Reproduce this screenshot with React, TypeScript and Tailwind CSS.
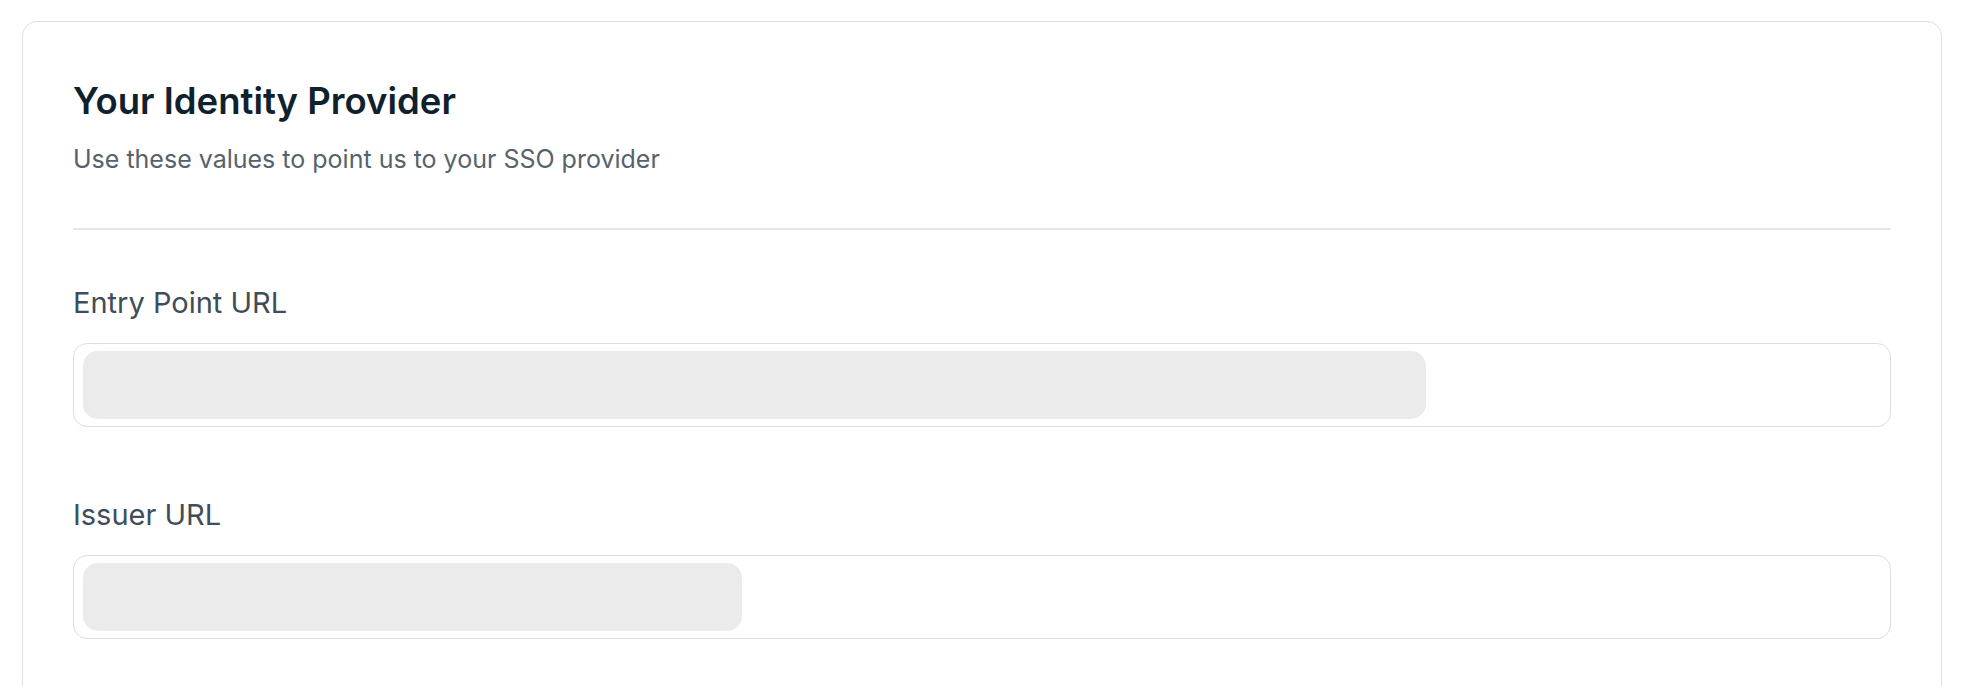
import React from 'react'

function Field({ label, barWidth }: { label: string; barWidth: string }) {
  return (
    <div className="flex flex-col">
      <label className="text-[29px] leading-[36px] text-[#3f4d58]">{label}</label>
      <div className="mt-[22px] rounded-[14px] border border-[#dedede] bg-white px-[9px] py-[7px]">
        <div className={`h-[68px] rounded-[15px] bg-[#ebebeb] ${barWidth}`} />
      </div>
    </div>
  )
}

export default function App() {
  return (
    <div className="h-[686px] overflow-hidden bg-white pt-[21px] px-[22px] font-['Inter',sans-serif]">
      <div className="rounded-[15px] border border-[#e0e0e0] bg-white px-[50px] pt-[57px] pb-[120px]">
        <h2 className="text-[36.5px] leading-[44px] font-semibold text-[#10212e]">Your Identity Provider</h2>
        <p className="mt-[20px] text-[25px] leading-[32px] text-[#56626c]">Use these values to point us to your SSO provider</p>
        <div className="mt-[53px] border-t-2 border-[#e6e6e6]" />
        <div className="mt-[55px] flex flex-col gap-[70px]">
          <Field label="Entry Point URL" barWidth="w-[1343px]" />
          <Field label="Issuer URL" barWidth="w-[659px]" />
        </div>
      </div>
    </div>
  )
}
